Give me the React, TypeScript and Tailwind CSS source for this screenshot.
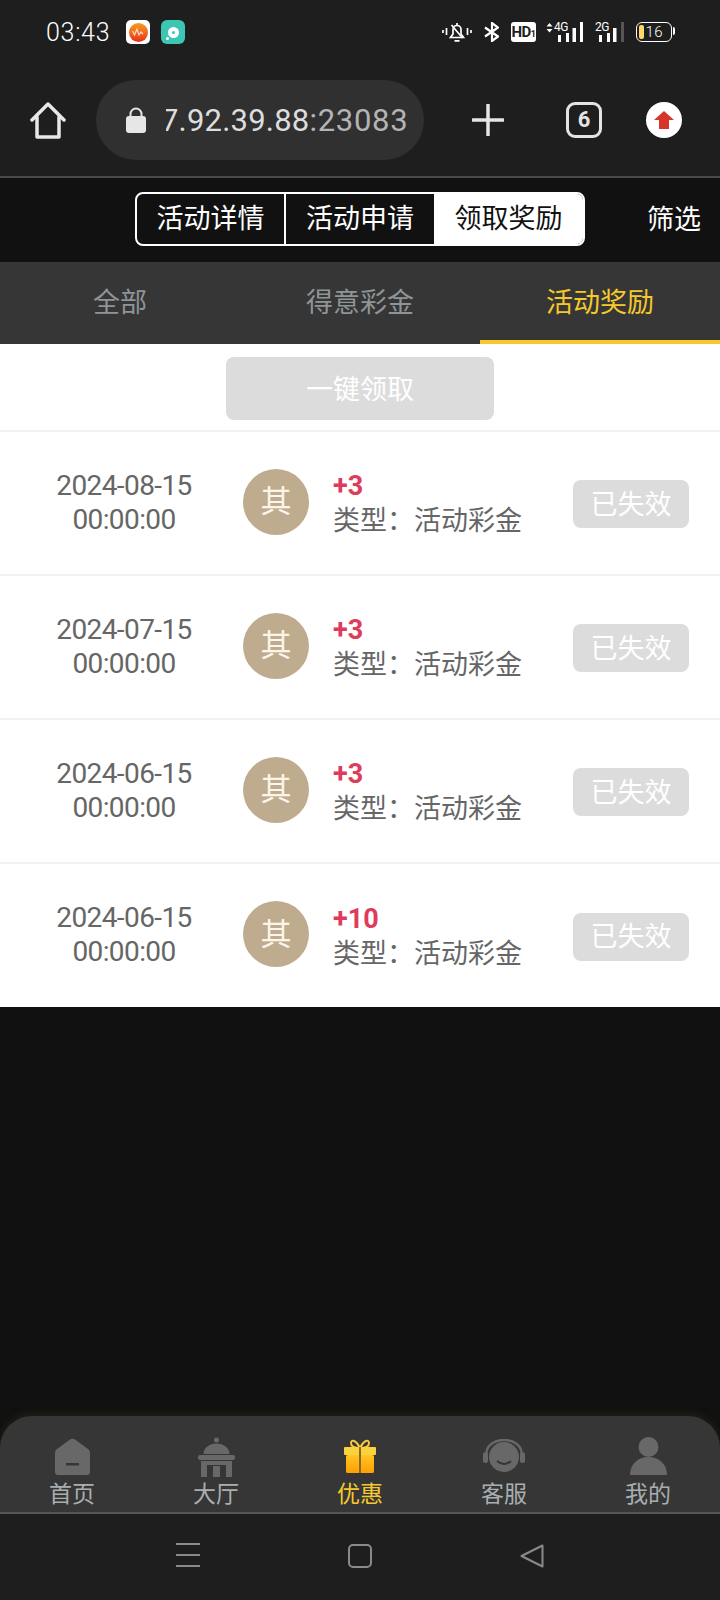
import React from 'react';

const CJK = "font-['Roboto','Noto_Sans_CJK_SC',sans-serif]";

const ROWS = [
  { date: '2024-08-15', amount: '+3' },
  { date: '2024-07-15', amount: '+3' },
  { date: '2024-06-15', amount: '+3' },
  { date: '2024-06-15', amount: '+10' },
];

const StatusIcons = () => (
  <div className="flex items-center">
    <svg width="30" height="20" viewBox="0 0 30 20" fill="none" stroke="#fff" strokeWidth="1.7" className="mr-[12px]">
      <path d="M1 8v3M4.500 6v7M25.500 6v7M29 8v3" />
      <path d="M8.500 15.500h13l-2.500-3.500V7.500a4 4 0 0 0-8 0V12z" />
      <path d="M15 1v2M12.500 18.800h5M9.500 3l11 13" />
    </svg>
    <svg width="15" height="20" viewBox="0 0 15 20" fill="none" stroke="#fff" strokeWidth="2.200" className="mr-[12px]">
      <path d="M1 5.500l13 9-6 4.500V1l6 4.500-13 9" />
    </svg>
    <div className="w-[25px] h-5 bg-white rounded-[3px] mr-[10px] flex items-center justify-center text-[#1e1e1e] text-[15px] font-bold font-['Roboto',sans-serif] leading-none tracking-[-0.5px]">
      HD<span className="text-[9px] mt-1">1</span>
    </div>
    <div className="relative w-[37px] h-5 mr-[12px]">
      <span className="absolute left-[8px] top-0 text-[12px] leading-[11px] tracking-[-0.5px] text-white font-['Roboto',sans-serif]">4G</span>
      <svg width="37" height="20" viewBox="0 0 37 20" className="absolute left-0 top-0" fill="#fff">
        <path d="M0.500 4.500L3.500 1l3 3.500zM0.500 7l3 3.500 3-3.500z" />
        <rect x="12" y="13" width="3" height="7" />
        <rect x="20" y="11" width="3" height="9" />
        <rect x="26.500" y="6" width="3.500" height="14" />
        <rect x="34" y="0" width="3" height="20" />
      </svg>
    </div>
    <div className="relative w-[29px] h-5 mr-[12px]">
      <span className="absolute left-0 top-0 text-[12px] leading-[11px] tracking-[-0.5px] text-white font-['Roboto',sans-serif]">2G</span>
      <svg width="29" height="20" viewBox="0 0 29 20" className="absolute left-0 top-0" fill="#fff">
        <rect x="4" y="13" width="3" height="7" />
        <rect x="12" y="11" width="3" height="9" />
        <rect x="18" y="6" width="3.500" height="14" />
        <rect x="26" y="0" width="3" height="20" fill="#555" />
      </svg>
    </div>
    <div className="w-9 h-5 border-[1.500px] border-white rounded-[6px] flex items-center pl-[1.500px] relative">
      <div className="w-[5px] h-[14px] bg-[#fcd968] rounded-[2px]" />
      <span className="ml-[2px] text-[15px] leading-none text-white font-['Roboto',sans-serif] font-light tracking-[0.5px]">16</span>
      <div className="absolute -right-[4px] top-[4px] w-[2px] h-2 bg-white rounded-r-sm" />
    </div>
  </div>
);

const GrayIcon = ({ name }: { name: string }) => {
  if (name === '首页') {
    return (
      <svg width="35" height="37" viewBox="0 0 35 37" className="mb-[1px]">
        <path d="M15 1.500q2.500-1.500 5 0L33 11q2 1.500 2 4v19q0 3-3 3H3q-3 0-3-3V15q0-2.500 2-4z" fill="#686868" />
        <rect x="11" y="25" width="13" height="2.500" fill="#363636" />
      </svg>
    );
  }
  if (name === '大厅') {
    return (
      <svg width="37" height="40" viewBox="0 0 37 40" fill="#686868" className="-mb-[1px]">
        <circle cx="18.500" cy="3" r="2.500" />
        <path d="M5.500 17a13 10.500 0 0 1 26 0z" />
        <rect x="0" y="18" width="37" height="5" rx="2" />
        <path d="M3 24h31v16h-6V28H9v12H3z" />
        <rect x="15" y="29" width="7" height="11" />
      </svg>
    );
  }
  if (name === '客服') {
    return (
      <svg width="42" height="33" viewBox="0 0 42 33" fill="none" className="mb-[4px]">
        <circle cx="21" cy="18" r="15" fill="#686868" />
        <path d="M3.500 14a17.500 13 0 0 1 35 0" stroke="#686868" strokeWidth="2.500" />
        <rect x="0" y="13" width="5" height="11" rx="2.500" fill="#686868" />
        <rect x="37" y="13" width="5" height="11" rx="2.500" fill="#686868" />
        <path d="M14 22q7 6 14 0" stroke="#363636" strokeWidth="2" />
      </svg>
    );
  }
  return (
    <svg width="37" height="38" viewBox="0 0 37 38" fill="#686868" className="mb-[1px]">
      <circle cx="18.500" cy="10" r="10" />
      <path d="M0 38C0 27 8 20 18.500 20S37 27 37 38z" />
    </svg>
  );
};

const GiftIcon = () => (
  <svg width="32" height="34" viewBox="0 0 32 34" className="mb-[3px]">
    <defs>
      <linearGradient id="gift" x1="0" y1="0" x2="0" y2="1">
        <stop offset="0" stopColor="#ffc524" />
        <stop offset="1" stopColor="#ff9f05" />
      </linearGradient>
    </defs>
    <path d="M16 9C12 1 7 0 7 4s5 5 9 5c4 0 9-1 9-5s-5-3-9 5z" fill="none" stroke="#f4cb3c" strokeWidth="2" />
    <rect x="0" y="8" width="32" height="8" rx="1" fill="#f8d33d" />
    <rect x="2" y="16" width="28" height="18" rx="1.500" fill="url(#gift)" />
    <rect x="15" y="8" width="2" height="26" fill="#8a6a1a" />
  </svg>
);

const NAV = ['首页', '大厅', '优惠', '客服', '我的'];

export default function App() {
  return (
    <div className={`w-[720px] h-[1600px] bg-[#111111] flex flex-col overflow-hidden ${CJK}`}>
      {/* phone status bar + browser bar */}
      <div className="h-[176px] bg-[#1e1e1e] shrink-0">
        <div className="h-[60px] pl-[46px] pr-[48px] pt-[20px] flex items-start justify-between">
          <div className="flex items-center h-6">
            <span className="text-white text-[25px] leading-none w-20 font-['Roboto',sans-serif] font-light tracking-[0.7px]">03:43</span>
            <div className="w-6 h-6 bg-white rounded-[5px] flex items-center justify-center">
              <div className="w-[19px] h-[19px] rounded-full bg-gradient-to-b from-[#f49a20] to-[#e8241c] flex items-center justify-center">
                <svg width="12" height="9" viewBox="0 0 12 9" fill="none" stroke="#ffd9c0" strokeWidth="1.200">
                  <path d="M0.500 3l2 4 2.500-6 2 6 2-3 2 2" />
                </svg>
              </div>
            </div>
            <div className="w-6 h-6 ml-[11px] bg-[#3cc7b4] rounded-[6px] relative flex items-center justify-center">
              <div className="w-[11px] h-[11px] rounded-full bg-white flex items-center justify-center">
                <div className="w-[3px] h-[3px] rounded-full bg-[#3cc7b4]" />
              </div>
              <div className="absolute left-[5px] bottom-[4px] w-[3px] h-[3px] rounded-full bg-white" />
            </div>
          </div>
          <div className="h-6 flex items-center">
            <StatusIcons />
          </div>
        </div>
        <div className="h-[80px] mt-[20px] flex items-center">
          <div className="w-[96px] flex justify-start pl-[30px] shrink-0">
            <svg width="36" height="37" viewBox="0 0 36 37" fill="none" stroke="#e8e8e8" strokeWidth="3.500" strokeLinejoin="round" strokeLinecap="round">
              <path d="M2 18L18 2l16 16" />
              <path d="M7 15v20h22V15" />
            </svg>
          </div>
          <div className="w-[328px] h-[80px] bg-[#303030] rounded-[40px] flex items-center shrink-0">
            <svg width="20" height="26" viewBox="0 0 20 26" className="ml-[30px] shrink-0" fill="#e6e6e6">
              <path d="M4.500 10V7a5.500 5.500 0 0 1 11 0v3" fill="none" stroke="#e6e6e6" strokeWidth="2" />
              <rect x="0" y="9" width="20" height="17" rx="3" />
            </svg>
            <div className="ml-[20px] w-[252px] overflow-hidden whitespace-nowrap text-[31px] leading-none text-[#dddddd] font-['Roboto',sans-serif] tracking-[0.2px]">
              <span className="-ml-[5px] inline-block">
                7.92.39.88<span className="text-[#b4b4b4] tracking-[0.7px]">:23083</span>
              </span>
            </div>
          </div>
          <div className="ml-[48px] shrink-0">
            <svg width="32" height="32" viewBox="0 0 32 32" stroke="#e6e6e6" strokeWidth="3.500" strokeLinecap="round">
              <path d="M16 1v30M1 16h30" />
            </svg>
          </div>
          <div className="ml-[62px] w-9 h-9 rounded-[9px] border-[3.500px] border-[#e4e4e4] flex items-center justify-center text-[#e4e4e4] text-[22px] font-bold leading-none font-['Roboto',sans-serif] shrink-0">
            6
          </div>
          <div className="ml-[44px] w-9 h-9 rounded-full bg-white flex items-center justify-center shrink-0">
            <svg width="20" height="18" viewBox="0 0 20 18" fill="#d8352a">
              <path d="M10 0L20 9h-5v9H5V9H0z" />
            </svg>
          </div>
        </div>
      </div>

      <div className="h-[2px] bg-[#4a4a4a] shrink-0" />

      {/* page header */}
      <div className="h-[84px] shrink-0 flex items-center relative text-white pb-[2px]">
        <div className="ml-[135px] w-[450px] h-[54px] border-2 border-white rounded-[8px] overflow-hidden flex text-[27px] leading-none">
          <div className="w-[149px] flex items-center justify-center border-r-2 border-white">活动详情</div>
          <div className="w-[148px] flex items-center justify-center">活动申请</div>
          <div className="flex-1 flex items-center justify-center bg-white text-[#111111]">领取奖励</div>
        </div>
        <span className="ml-[62px] mt-[2px] text-[27px] leading-none">筛选</span>
      </div>

      {/* tabs */}
      <div className="h-[82px] bg-[#363636] shrink-0 flex text-[27px] leading-none text-[#8f9496]">
        <div className="w-[240px] flex items-center justify-center">全部</div>
        <div className="w-[240px] flex items-center justify-center">得意彩金</div>
        <div className="w-[240px] flex items-center justify-center text-[#f5c92c] border-b-4 border-[#f5c92c] pt-[4px]">活动奖励</div>
      </div>

      {/* list */}
      <div className="bg-white shrink-0">
        <div className="h-[88px] border-b-2 border-[#f1f1f1] flex justify-center pt-[13px]">
          <div className="w-[268px] h-[63px] bg-[#dcdcdc] rounded-[8px] flex items-center justify-center text-white text-[27px] leading-none pt-[4px]">
            一键领取
          </div>
        </div>
        {ROWS.map((row, idx) => (
          <div key={idx} className={`flex items-center ${idx < 3 ? 'h-[144px] border-b-2 border-[#f1f1f1]' : 'h-[143px]'}`}>
            <div className="w-[243px] pl-[5px] text-center text-[#666666] text-[28px] leading-[34px] tracking-[-0.6px] font-['Roboto',sans-serif] shrink-0 -mt-[1px]">
              <div>{row.date}</div>
              <div>00:00:00</div>
            </div>
            <div className="w-[66px] h-[66px] -mt-[3px] rounded-full bg-[#bfac8e] text-[#fbf5ea] text-[31px] leading-none flex items-center justify-center shrink-0">
              其
            </div>
            <div className="ml-[24px] w-[240px] mt-[2px] shrink-0">
              <div className="text-[#e03a5c] text-[27px] leading-[34px] font-bold font-['Roboto',sans-serif]">{row.amount}</div>
              <div className="text-[#666666] text-[27px] leading-[36px]">类型：活动彩金</div>
            </div>
            <div className="w-[116px] h-[48px] mt-[2px] bg-[#dcdcdc] rounded-[8px] flex items-center justify-center text-white text-[27px] leading-none pt-[2px] shrink-0">
              已失效
            </div>
          </div>
        ))}
      </div>

      <div className="flex-1" />

      {/* bottom nav */}
      <div className="h-[98px] shrink-0 bg-[#363636] rounded-t-[32px] border-b-2 border-[#555555] shadow-[0_-2px_8px_rgba(90,80,40,0.25)] flex">
        {NAV.map((name, idx) => (
          <div key={name} className="w-[144px] h-full flex flex-col items-center pt-[20px]">
            <div className="h-[40px] flex items-end">
              {name === '优惠' ? <GiftIcon /> : <GrayIcon name={name} />}
            </div>
            <span className={`mt-[4px] text-[23px] leading-[30px] ${idx === 2 ? 'text-[#f5c92c]' : 'text-[#a9aeb0]'}`}>{name}</span>
          </div>
        ))}
      </div>

      {/* android nav */}
      <div className="h-[86px] shrink-0 bg-[#1e1e1e] relative">
        <div className="absolute left-[176px] top-[29px] w-6 h-[24px] flex flex-col justify-between">
          <div className="h-[2px] bg-[#8a8a8a]" />
          <div className="h-[2px] bg-[#8a8a8a]" />
          <div className="h-[2px] bg-[#8a8a8a]" />
        </div>
        <div className="absolute left-[348px] top-[30px] w-[24px] h-[24px] border-2 border-[#8a8a8a] rounded-[5px]" />
        <svg width="24" height="24" viewBox="0 0 24 24" className="absolute left-[520px] top-[30px]" fill="none" stroke="#8a8a8a" strokeWidth="2" strokeLinejoin="round">
          <path d="M1.500 12L22.500 1.500v21z" />
        </svg>
      </div>
    </div>
  );
}
